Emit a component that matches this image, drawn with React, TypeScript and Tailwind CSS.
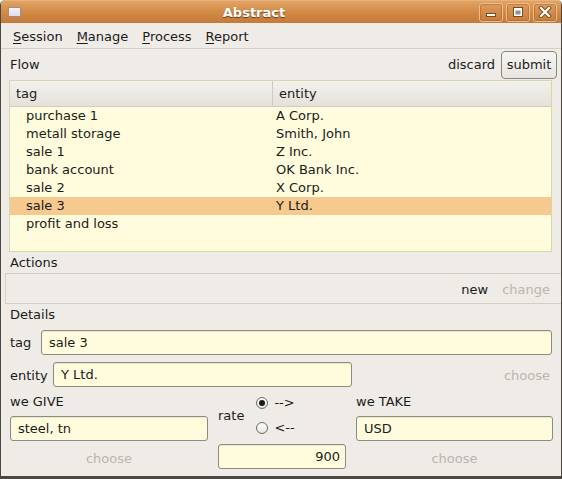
import React from 'react';

const rows = [
  { tag: 'purchase 1', entity: 'A Corp.' },
  { tag: 'metall storage', entity: 'Smith, John' },
  { tag: 'sale 1', entity: 'Z Inc.' },
  { tag: 'bank account', entity: 'OK Bank Inc.' },
  { tag: 'sale 2', entity: 'X Corp.' },
  { tag: 'sale 3', entity: 'Y Ltd.', selected: true },
  { tag: 'profit and loss', entity: '' },
];

function WinButton({ kind }: { kind: 'min' | 'max' | 'close' }) {
  return (
    <div className="w-[24px] h-[19px] rounded-[3px] border border-[#edbd8c] bg-gradient-to-b from-[#dc9b5b] to-[#c87d3c] flex items-center justify-center shadow-[inset_0_0_0_1px_rgba(150,80,20,0.35)]">
      <svg width="14" height="12" viewBox="0 0 14 12">
        {kind === 'min' && (
          <rect x="2.5" y="7.5" width="9" height="3" fill="#fff" stroke="#7a4a20" strokeWidth="1" />
        )}
        {kind === 'max' && (
          <g>
            <rect x="2.5" y="1.5" width="9" height="9" fill="#fff" stroke="#7a4a20" strokeWidth="1" />
            <rect x="4.5" y="4.5" width="5" height="4" fill="#9a8f83" />
          </g>
        )}
        {kind === 'close' && (
          <g strokeLinecap="square">
            <path d="M3 2 L11 10 M11 2 L3 10" stroke="#7a4a20" strokeWidth="4" />
            <path d="M3 2 L11 10 M11 2 L3 10" stroke="#fff" strokeWidth="2.2" />
          </g>
        )}
      </svg>
    </div>
  );
}

function Field({ children, className = '' }: { children?: React.ReactNode; className?: string }) {
  return (
    <div
      className={`h-[25px] flex items-center px-[7px] pt-[1px] bg-[#fefcdc] border border-[#8e8a83] rounded-[3px] shadow-[inset_0_1px_1px_rgba(0,0,0,0.08)] ${className}`}
    >
      {children}
    </div>
  );
}

function Radio({ checked, label }: { checked?: boolean; label: string }) {
  return (
    <div className="h-[25px] flex items-center">
      <div className="w-[12px] h-[12px] rounded-full border border-[#6f6b64] bg-gradient-to-b from-white to-[#e6e3de] flex items-center justify-center">
        {checked && <div className="w-[6px] h-[6px] rounded-full bg-[#1b1b1b]" />}
      </div>
      <span className="ml-[6px]">{label}</span>
    </div>
  );
}

export default function App() {
  return (
    <div className="w-[562px] h-[479px] flex flex-col bg-[#efebe7] font-['DejaVu_Sans',sans-serif] text-[13px] text-[#1b1b1b] border-x border-b-[3px] border-[#4c4943] rounded-t-[5px] overflow-hidden">
      {/* Title bar */}
      <div className="h-[23px] flex items-center bg-gradient-to-b from-[#e0a466] via-[#d28a46] to-[#c47a3a] border-t border-[#eab27a]">
        <div className="ml-[7px] w-[13px] h-[10px] bg-gradient-to-b from-[#f4f3fb] to-[#dcdbe8] border border-[#a38c80] rounded-[1px]" />
        <div className="flex-1 text-center font-bold text-white [text-shadow:0_1px_1px_rgba(80,40,10,0.8)] pl-[8px] pt-[2px]">
          Abstract
        </div>
        <div className="flex gap-[3px] mr-[4px]">
          <WinButton kind="min" />
          <WinButton kind="max" />
          <WinButton kind="close" />
        </div>
      </div>

      {/* Menu bar */}
      <div className="h-[26px] flex items-center pl-[12px] gap-[14px] pt-[3px] border-b border-[#d3cfc8]">
        {['Session', 'Manage', 'Process', 'Report'].map((m) => (
          <span key={m}>
            <span className="underline underline-offset-[2px]">{m[0]}</span>
            {m.slice(1)}
          </span>
        ))}
      </div>

      {/* Flow header */}
      <div className="h-[31px] flex items-center pl-[9px] pr-[4px]">
        <span className="flex-1">Flow</span>
        <span className="mr-[6px]">discard</span>
        <div className="w-[56px] h-[28px] flex items-center justify-center rounded-[4px] border border-[#8a867f] bg-gradient-to-b from-[#f6f4f1] to-[#e9e6e1]">
          submit
        </div>
      </div>

      {/* Table */}
      <div className="ml-[8px] mr-[9px] h-[172px] border border-[#d6d8ab] bg-[#fefcdc] flex flex-col">
        <div className="h-[26px] flex border-b border-[#cfccc5] bg-gradient-to-b from-[#f3f1ed] to-[#e4e1db]">
          <div className="w-[263px] pl-[6px] flex items-center border-r border-[#cfccc5]">tag</div>
          <div className="flex-1 pl-[6px] flex items-center">entity</div>
        </div>
        {rows.map((r) => (
          <div key={r.tag} className={`h-[18px] flex items-center ${r.selected ? 'bg-[#f6c98f]' : ''}`}>
            <div className="w-[263px] pl-[16px]">{r.tag}</div>
            <div className="flex-1 pl-[3px]">{r.entity}</div>
          </div>
        ))}
      </div>

      {/* Actions */}
      <div className="h-[21px] flex items-center pl-[9px]">Actions</div>
      <div className="ml-[4px] h-[31px] flex items-center justify-end gap-[14px] pr-[11px] pt-[3px] border-t border-l border-b border-[#d3cfc8]">
        <span>new</span>
        <span className="text-[#bab6af]">change</span>
      </div>

      {/* Details */}
      <div className="h-[21px] flex items-center pl-[9px]">Details</div>
      <div className="mt-[5px] flex items-center pl-[9px] pr-[9px]">
        <span className="w-[31px]">tag</span>
        <Field className="flex-1">sale 3</Field>
      </div>
      <div className="mt-[7px] flex items-center pl-[9px] pr-[11px]">
        <span className="w-[43px] pt-[2px]">entity</span>
        <Field className="w-[299px]">Y Ltd.</Field>
        <span className="flex-1 text-right text-[#bab6af] pt-[3px]">choose</span>
      </div>

      <div className="flex pl-[9px]">
        <div className="w-[198px] flex flex-col">
          <div className="mt-[7px] h-[15px] flex items-center">we GIVE</div>
          <Field className="mt-[7px]">steel, tn</Field>
          <div className="h-[35px] flex items-center justify-center text-[#bab6af]">choose</div>
        </div>
        <div className="ml-[10px] w-[128px] flex flex-col">
          <div className="h-[57px] flex items-center">
            <span>rate</span>
            <div className="ml-[12px] flex flex-col">
              <Radio checked label="-->" />
              <Radio label="<--" />
            </div>
          </div>
          <Field className="justify-end !pr-[5px]">900</Field>
        </div>
        <div className="ml-[10px] w-[197px] flex flex-col">
          <div className="mt-[7px] h-[15px] flex items-center">we TAKE</div>
          <Field className="mt-[7px]">USD</Field>
          <div className="h-[35px] flex items-center justify-center text-[#bab6af]">choose</div>
        </div>
      </div>
    </div>
  );
}
